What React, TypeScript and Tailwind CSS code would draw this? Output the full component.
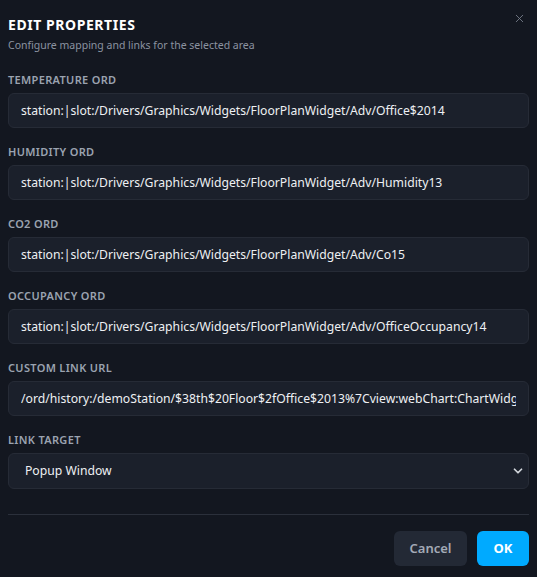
import { X, ChevronDown } from 'lucide-react';

const fields = [
  { label: 'Temperature ORD', value: 'station:|slot:/Drivers/Graphics/Widgets/FloorPlanWidget/Adv/Office$2014' },
  { label: 'Humidity ORD', value: 'station:|slot:/Drivers/Graphics/Widgets/FloorPlanWidget/Adv/Humidity13' },
  { label: 'CO2 ORD', value: 'station:|slot:/Drivers/Graphics/Widgets/FloorPlanWidget/Adv/Co15' },
  { label: 'Occupancy ORD', value: 'station:|slot:/Drivers/Graphics/Widgets/FloorPlanWidget/Adv/OfficeOccupancy14' },
  {
    label: 'Custom Link URL',
    value: '/ord/history:/demoStation/$38th$20Floor$2fOffice$2013%7Cview:webChart:ChartWidget',
  },
];

function Label({ children }: { children: string }) {
  return (
    <div className="h-[14px] text-[11px] leading-[14px] font-semibold uppercase tracking-[0.03em] text-[#9ba3b0]">
      {children}
    </div>
  );
}

export default function App() {
  return (
    <div
      className="w-[537px] h-[577px] bg-[#131720] text-white relative overflow-hidden"
      style={{ fontFamily: '"Noto Sans", "Open Sans", sans-serif' }}
    >
      <button className="absolute right-[11px] top-[12px] text-[#7a818d]">
        <X size={13} strokeWidth={1.6} />
      </button>

      <div className="px-[8px] pt-[16px]">
        <h2 className="text-[14px] leading-[18px] font-bold tracking-[0.04em] text-white">EDIT PROPERTIES</h2>
        <p className="mt-[4px] text-[10.5px] leading-[14px] text-[#8b93a0]">
          Configure mapping and links for the selected area
        </p>

        <div className="mt-[21px] flex flex-col">
          {fields.map((f) => (
            <div key={f.label} className="h-[72px]">
              <Label>{f.label}</Label>
              <input
                readOnly
                value={f.value}
                className="mt-[6px] w-full h-[35px] rounded-[6px] border border-[#262b36] bg-[#1b202b] px-[12px] text-[12.2px] text-[#eef0f3] outline-none"
              />
            </div>
          ))}
          <div>
            <Label>Link Target</Label>
            <div className="mt-[6px] relative h-[36px] rounded-[6px] border border-[#262b36] bg-[#1b202b] flex items-center px-[16px] text-[12.2px] text-[#eef0f3]">
              Popup Window
              <ChevronDown size={14} strokeWidth={3} className="absolute right-[3px] top-[10px] text-[#d1d5db]" />
            </div>
          </div>
        </div>

        <div className="mt-[25px] h-px bg-[#2b303b]" />

        <div className="mt-[16px] flex justify-end gap-[10px]">
          <button className="h-[35px] w-[73px] rounded-[6px] bg-[#232935] text-[13px] font-semibold text-[#a3aab6]">
            Cancel
          </button>
          <button className="h-[35px] w-[52px] rounded-[6px] bg-[#00aaff] text-[13px] font-bold text-white">
            OK
          </button>
        </div>
      </div>
    </div>
  );
}
